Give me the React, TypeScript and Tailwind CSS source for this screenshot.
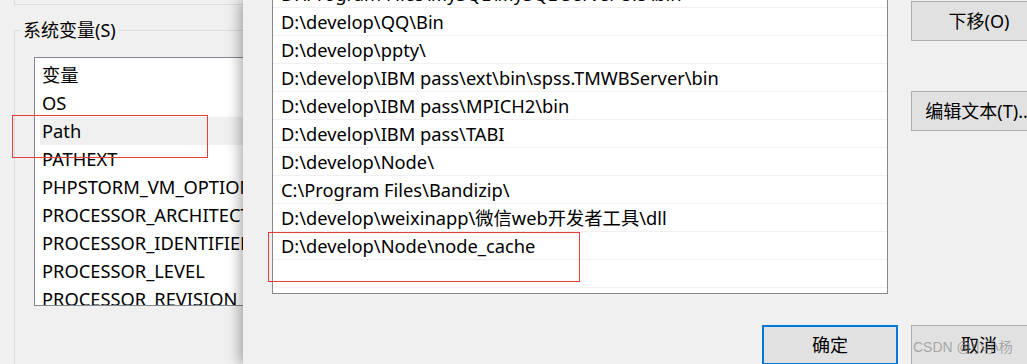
const systemVars = [
  '变量',
  'OS',
  'Path',
  'PATHEXT',
  'PHPSTORM_VM_OPTIONS',
  'PROCESSOR_ARCHITECTURE',
  'PROCESSOR_IDENTIFIER',
  'PROCESSOR_LEVEL',
  'PROCESSOR_REVISION',
];

const pathEntries = [
  'D:\\Program Files\\MySQL\\MySQL Server 5.5\\bin',
  'D:\\develop\\QQ\\Bin',
  'D:\\develop\\ppty\\',
  'D:\\develop\\IBM pass\\ext\\bin\\spss.TMWBServer\\bin',
  'D:\\develop\\IBM pass\\MPICH2\\bin',
  'D:\\develop\\IBM pass\\TABI',
  'D:\\develop\\Node\\',
  'C:\\Program Files\\Bandizip\\',
  'D:\\develop\\weixinapp\\微信web开发者工具\\dll',
  'D:\\develop\\Node\\node_cache',
  '',
];

export default function App() {
  return (
    <div className="flex h-[364px] w-full overflow-hidden bg-[#f0f0f0] font-['Noto_Sans','Noto_Sans_CJK_SC',sans-serif] text-[18.3px] text-black">
      {/* back window: environment variables */}
      <div className="relative flex h-full w-[243px] shrink-0 flex-col overflow-hidden">
        <div className="ml-[14px] h-[5px] shrink-0 border-b border-l border-[#dcdcdc]" />
        <fieldset className="ml-[14px] mt-[13px] min-w-0 flex-1 border-l border-t border-[#dcdcdc]">
          <legend className="ml-[5px] px-[3px] text-[18px] leading-[24px]">系统变量(S)</legend>
          <div className="ml-[19px] mt-[15px] h-[249px] w-[260px] overflow-hidden border border-[#828790] bg-white pt-[3px]">
            {systemVars.map(v => (
              <div
                key={v}
                className={`mx-[5px] h-[28px] whitespace-nowrap pl-[2px] leading-[28px] ${v === 'Path' ? 'bg-[#f0f0f0]' : ''}`}
              >
                {v}
              </div>
            ))}
          </div>
        </fieldset>
        <div className="absolute left-[12px] top-[115px] h-[43px] w-[196px] border border-[#ec3b3b]" />
      </div>

      {/* front dialog: edit path */}
      <div className="relative z-10 flex h-full min-w-0 flex-1 flex-col overflow-hidden bg-[#f0f0f0] shadow-[-4px_0_12px_rgba(0,0,0,0.3)]">
        <div className="flex">
          <div className="-mt-[20px] ml-[29px] h-[314px] w-[616px] shrink-0 border border-t-0 border-[#878787] bg-white">
            {pathEntries.map((p, i) => (
              <div key={i} className="h-[28px] whitespace-nowrap border-b border-[#f0f0f0] pl-[8px] leading-[27px]">
                {p}
              </div>
            ))}
          </div>
          <div className="ml-[23px] mt-[1px] flex w-[136px] shrink-0 flex-col gap-[50px] text-[18px]">
            <button className="h-[40px] whitespace-nowrap border border-[#adadad] bg-[#e1e1e1]">下移(O)</button>
            <button className="h-[40px] whitespace-nowrap border border-[#adadad] bg-[#e1e1e1]">编辑文本(T)...</button>
          </div>
        </div>
        <div className="ml-[519px] mt-[31px] flex gap-[13px] text-[18px]">
          <button className="h-[40px] w-[136px] shrink-0 border-2 border-[#0078d7] bg-[#e1e1e1]">确定</button>
          <button className="h-[40px] w-[136px] shrink-0 border border-[#adadad] bg-[#e1e1e1]">取消</button>
        </div>
        <div className="absolute left-[25px] top-[232px] h-[50px] w-[312px] border border-[#ec3b3b]" />
        <div className="absolute left-[670px] top-[337px] whitespace-nowrap font-['Liberation_Sans','Noto_Sans_CJK_SC',sans-serif] text-[14px] leading-[20px] text-[#8a8a8a]/70">
          CSDN @小小杨
        </div>
      </div>
    </div>
  );
}
